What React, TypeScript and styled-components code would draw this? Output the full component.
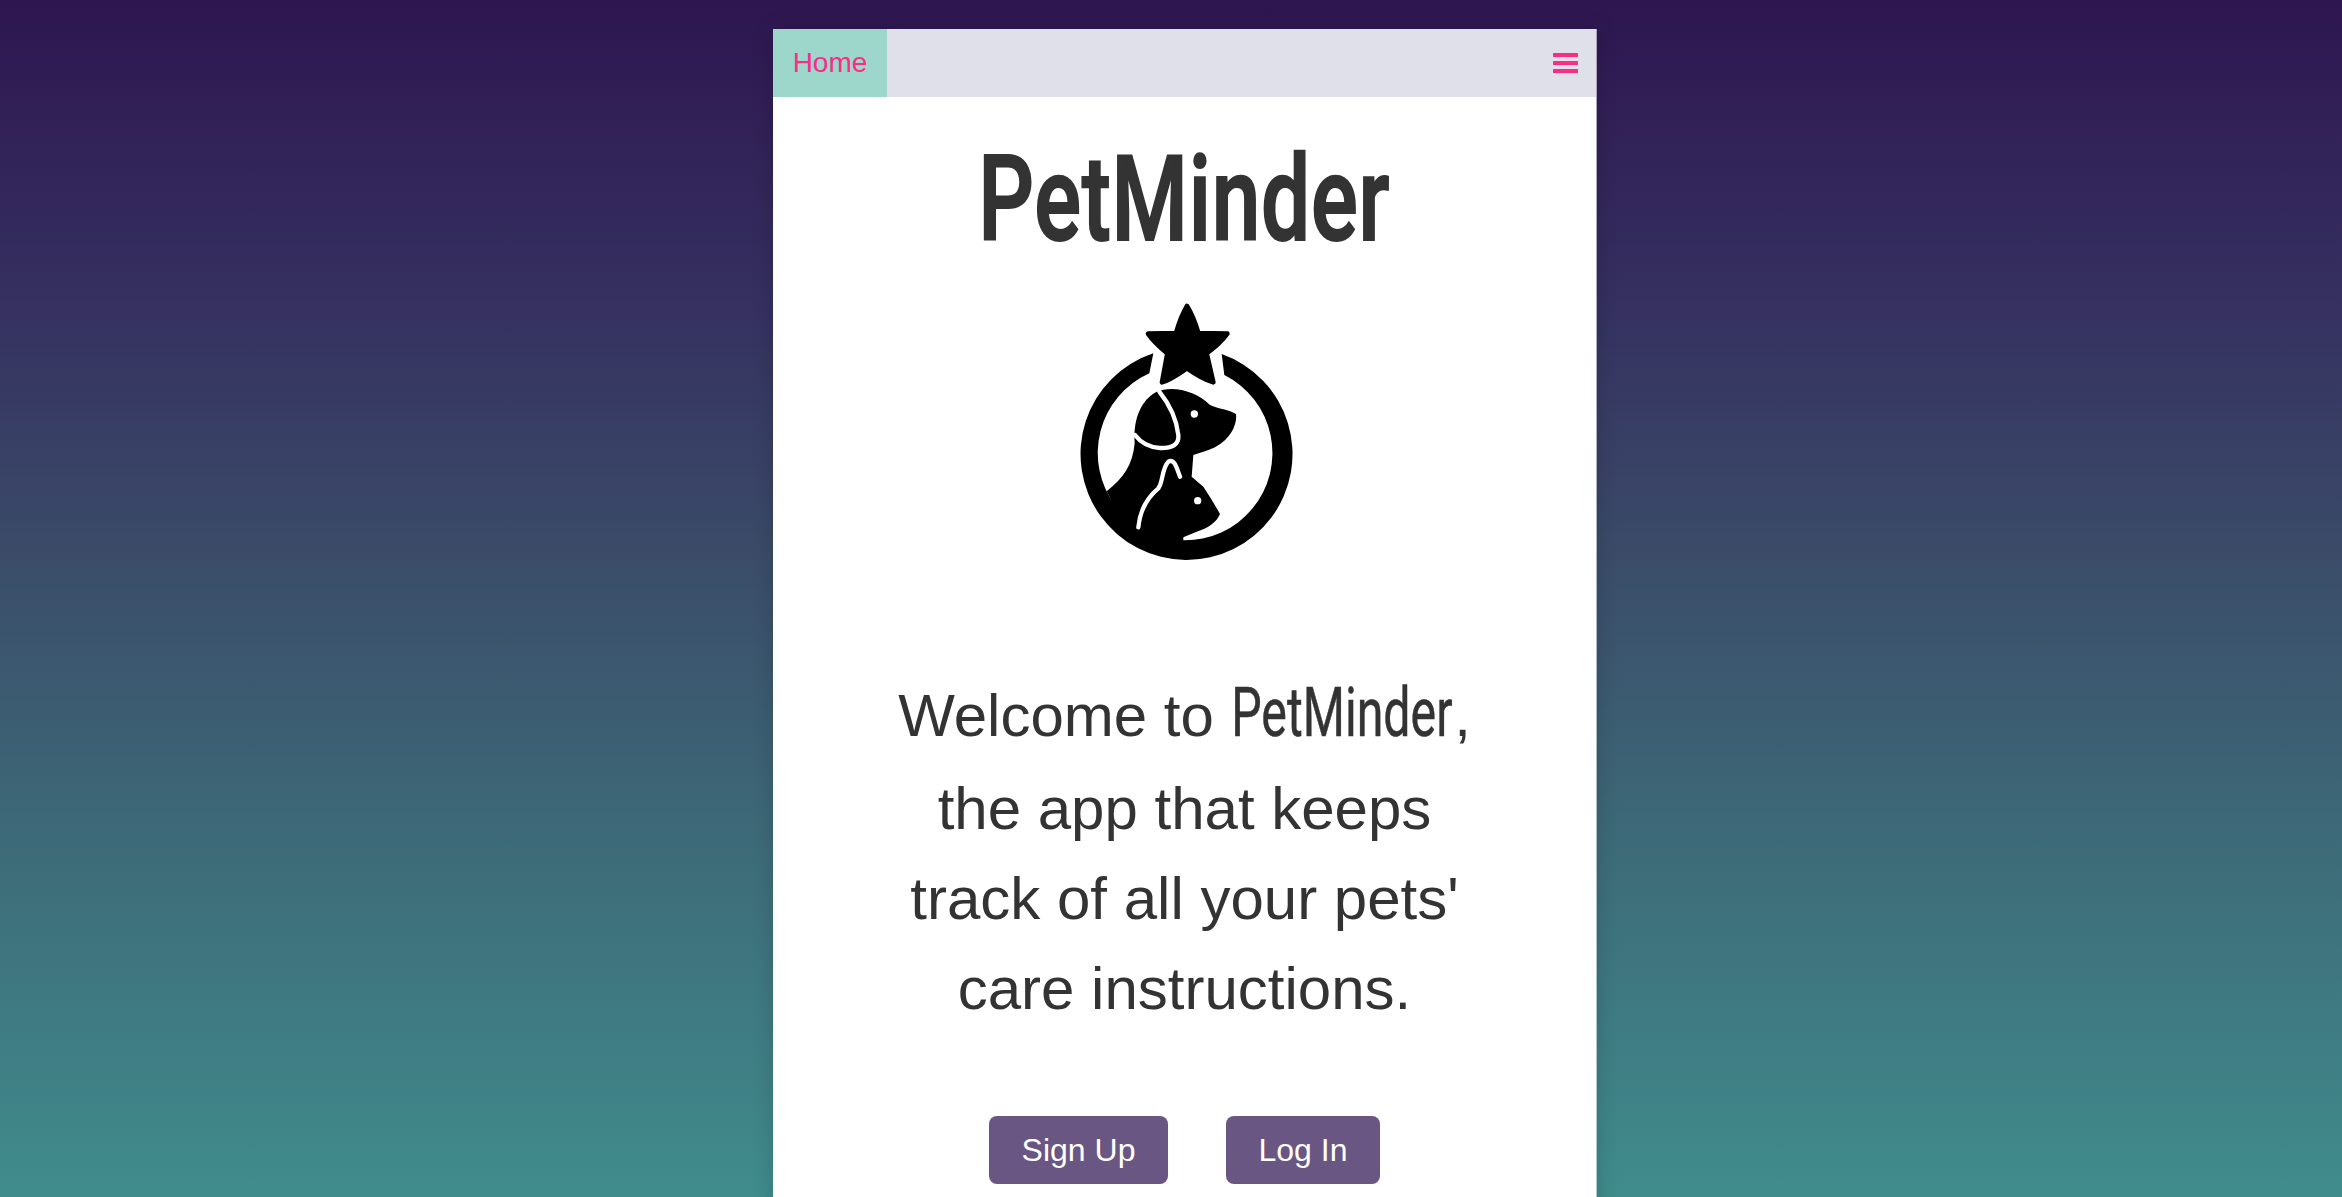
import React from "react";
import styled, { createGlobalStyle } from "styled-components";

const Global = createGlobalStyle`
  html, body { margin: 0; padding: 0; height: 100%; overflow: hidden; }
  body { font-family: "Liberation Sans", Arial, sans-serif; color: #333; }
`;

const Page = styled.div`
  height: 1197px;
  overflow: hidden;
  padding-top: 29px;
  box-sizing: border-box;
  background: linear-gradient(180deg, #2e1650 0%, #353060 25%, #3a4a68 45%, #3d6a78 70%, #408c8c 100%);
`;

const Card = styled.main`
  box-sizing: border-box;
  width: 824px;
  min-height: 1300px;
  margin-left: 773px;
  background: #fff;
  background-clip: padding-box;
  border-right: 1px solid rgba(255, 255, 255, 0.6);
  box-shadow: 0 0 20px rgba(0, 0, 0, 0.16);
`;

const Nav = styled.nav`
  height: 68px;
  display: flex;
  align-items: stretch;
  justify-content: space-between;
  background: #e0e0ea;
`;

const HomeTab = styled.a`
  width: 114px;
  display: flex;
  align-items: center;
  justify-content: center;
  background: #9dd6cb;
  color: #fb2b86;
  font-size: 28px;
`;

const MenuButton = styled.button`
  border: 0;
  padding: 0 18px 0 0;
  background: none;
  display: flex;
  align-items: center;
`;

const Title = styled.h1`
  box-sizing: border-box;
  height: 193px;
  margin: 0;
  padding-top: 12px;
  display: flex;
  align-items: center;
  justify-content: center;
  font-weight: 400;
`;

const TitleWord = styled.span`
  display: inline-block;
  font-family: Roboto, "Liberation Sans", sans-serif;
  font-size: 118px;
  font-weight: 500;
  color: #333;
  -webkit-text-stroke: 2px #333;
  transform: scaleX(0.74);
  letter-spacing: 1px;
`;

const Logo = styled.svg`
  display: block;
  width: 270px;
  height: 280px;
  margin: 0 auto;
`;

const Intro = styled.p`
  margin: 101px 0 0;
  font-size: 60px;
  line-height: 90px;
  text-align: center;
  color: #333;
`;

const IntroLine = styled.span<{ $after?: number }>`
  display: block;
  margin-bottom: ${(p) => p.$after ?? 0}px;
`;

const BrandWord = styled.span`
  display: inline-block;
  margin: 0 -44px;
  font-family: Roboto, "Liberation Sans", sans-serif;
  font-weight: 400;
  font-size: 68px;
  line-height: 1;
  -webkit-text-stroke: 0.5px #333;
  transform: scaleX(0.71);
`;

const Actions = styled.div`
  margin-top: 82px;
  display: flex;
  justify-content: center;
  gap: 58px;
`;

const Action = styled.button<{ $w: number }>`
  width: ${(p) => p.$w}px;
  height: 68px;
  border: 0;
  border-radius: 8px;
  background: #6a5682;
  color: #fff;
  font-family: "Liberation Sans", Arial, sans-serif;
  font-size: 32px;
`;

const PetLogo = () => (
  <Logo viewBox="30 0 810 840" aria-label="PetMinder logo">
    <path fill="#000" d="M340 190 A318 318 0 1 0 545 192 L553 255 A262 262 0 1 1 328 250 Z" />
    <path
      fill="#000"
      d="M200 604 C250 565 278 525 284 460 C280 400 295 335 350 305 C400 285 470 305 510 345 C540 358 570 360 588 372 C592 400 575 445 525 472 C505 482 480 488 460 495 L455 560 L490 590 C510 620 525 645 540 672 C530 695 510 712 470 725 L430 742 L430 780 L270 740 Z"
    />
    <g fill="none" stroke="#fff" strokeWidth="13" strokeLinecap="round" strokeLinejoin="round">
      <path d="M358 305 C390 345 410 390 415 435 C418 465 395 475 360 474 C325 472 300 455 285 435" />
      <path d="M295 712 C300 660 325 620 355 595 C370 575 365 535 385 515 C405 505 410 535 420 560" />
    </g>
    <circle cx="463" cy="372" r="11" fill="#fff" />
    <circle cx="473" cy="632" r="11" fill="#fff" />
    <path
      fill="#000"
      stroke="#000"
      strokeWidth="14"
      strokeLinejoin="round"
      d="M441 48 C455 70 468 105 475 129 L562 131 C545 155 525 172 500 190 L520 277 C490 268 465 252 441 235 C415 252 395 268 366 277 L382 190 C360 172 340 155 324 131 L408 129 C415 105 428 70 441 48Z"
    />
  </Logo>
);

export default function App() {
  return (
    <Page>
      <Global />
      <Card>
        <Nav>
          <HomeTab>Home</HomeTab>
          <MenuButton aria-label="Menu">
            <svg width="25" height="20" viewBox="0 0 25 20" fill="#fb2b86">
              <rect width="25" height="4" rx="0.5" />
              <rect y="8" width="25" height="4" rx="0.5" />
              <rect y="16" width="25" height="4" rx="0.5" />
            </svg>
          </MenuButton>
        </Nav>
        <Title>
          <TitleWord>PetMinder</TitleWord>
        </Title>
        <PetLogo />
        <Intro>
          <IntroLine $after={3}>
            Welcome to <BrandWord>PetMinder</BrandWord>,
          </IntroLine>
          <IntroLine>the app that keeps</IntroLine>
          <IntroLine>track of all your pets'</IntroLine>
          <IntroLine>care instructions.</IntroLine>
        </Intro>
        <Actions>
          <Action $w={179}>Sign Up</Action>
          <Action $w={154}>Log In</Action>
        </Actions>
      </Card>
    </Page>
  );
}
